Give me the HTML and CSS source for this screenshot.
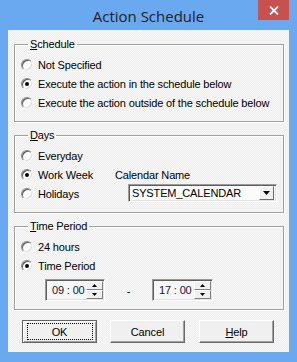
FILE: index.html
```html
<!DOCTYPE html>
<html>
<head>
  <meta charset="utf-8">
  <title>Action Schedule</title>
  <link rel="stylesheet" href="styles.css">
</head>
<body>
<div class="window">
  <div class="titlebar">
    <span class="title">Action Schedule</span>
    <span class="close">
      <svg width="10" height="9" viewBox="0 0 10 9"><path d="M1 0.5 L9 8.5 M9 0.5 L1 8.5" stroke="#fff" stroke-width="1.8"/></svg>
    </span>
  </div>
  <div class="client">
    <fieldset class="group group-schedule">
      <legend><u>S</u>chedule</legend>
      <div class="row"><span class="radio"></span>Not Specified</div>
      <div class="row"><span class="radio checked"></span>Execute the action in the schedule below</div>
      <div class="row"><span class="radio"></span>Execute the action outside of the schedule below</div>
    </fieldset>

    <fieldset class="group group-days">
      <legend><u>D</u>ays</legend>
      <div class="days-grid">
        <div class="row"><span class="radio"></span>Everyday</div>
        <div></div>
        <div class="row"><span class="radio checked"></span>Work Week</div>
        <div class="row">Calendar Name</div>
        <div class="row"><span class="radio"></span>Holidays</div>
        <div class="combo">
          <span class="combo-text">SYSTEM_CALENDAR</span>
          <span class="combo-btn">
            <svg width="7" height="4" viewBox="0 0 7 4"><path d="M0 0 H7 L3.5 4 Z" fill="#000"/></svg>
          </span>
        </div>
      </div>
    </fieldset>

    <fieldset class="group group-time">
      <legend><u>T</u>ime Period</legend>
      <div class="row"><span class="radio"></span>24 hours</div>
      <div class="row"><span class="radio checked"></span>Time Period</div>
      <div class="time-row">
        <div class="spin">
          <span class="spin-text">09 : 00</span>
          <span class="spin-btns">
            <span class="spin-btn"><svg width="5" height="3" viewBox="0 0 5 3"><path d="M0 3 H5 L2.5 0 Z" fill="#000"/></svg></span>
            <span class="spin-btn"><svg width="5" height="3" viewBox="0 0 5 3"><path d="M0 0 H5 L2.5 3 Z" fill="#000"/></svg></span>
          </span>
        </div>
        <span class="dash">-</span>
        <div class="spin">
          <span class="spin-text">17 : 00</span>
          <span class="spin-btns">
            <span class="spin-btn"><svg width="5" height="3" viewBox="0 0 5 3"><path d="M0 3 H5 L2.5 0 Z" fill="#000"/></svg></span>
            <span class="spin-btn"><svg width="5" height="3" viewBox="0 0 5 3"><path d="M0 0 H5 L2.5 3 Z" fill="#000"/></svg></span>
          </span>
        </div>
      </div>
    </fieldset>

    <div class="buttons">
      <div class="btn btn-default"><span class="focus">OK</span></div>
      <div class="btn">Cancel</div>
      <div class="btn"><span><u>H</u>elp</span></div>
    </div>
  </div>
</div>
</body>
</html>
```

FILE: styles.css
```css
body {
  margin: 0;
}

.window {
  width: 297px;
  height: 362px;
  background: #6aa8f0;
  font-family: "Liberation Sans", Arial, sans-serif;
  font-size: 11px;
  letter-spacing: -0.15px;
  color: #000;
}

.titlebar {
  position: relative;
  height: 30px;
  display: flex;
  align-items: center;
  justify-content: center;
}
.title {
  font-family: "Open Sans", "Noto Sans", sans-serif;
  font-size: 15px;
  letter-spacing: 0;
  color: #222;
  margin-top: 1px;
}
.close {
  position: absolute;
  right: 8px;
  top: 0;
  width: 31px;
  height: 20px;
  background: #c75050;
  display: flex;
  align-items: center;
  justify-content: center;
}

.client {
  margin: 0 8px;
  height: 322px;
  box-sizing: border-box;
  padding: 7px 5px 0 6px;
  background: repeating-conic-gradient(#efefef 0 25%, #f6f6f6 0 50%) 0 0 / 2px 2px;
}

.group {
  margin: 0 0 6px 0;
  padding: 4px 6px 0 6px;
  border: 1px solid #a0a0a0;
  box-shadow: inset 1px 1px 0 #fff, 1px 1px 0 #fff;
  box-sizing: border-box;
  min-width: 0;
}
.group legend {
  padding: 0 2px;
  margin-left: 7px;
  line-height: 14px;
}
.group-schedule { height: 85px; }
.group-days { height: 85px; }
.group-time { height: 91px; }

.row {
  display: flex;
  align-items: center;
  height: 19px;
  white-space: nowrap;
}

.radio {
  position: relative;
  width: 12px;
  height: 12px;
  box-sizing: border-box;
  border-radius: 50%;
  border: 1px solid;
  border-color: #8a8a8a #f4f4f4 #f4f4f4 #8a8a8a;
  box-shadow: inset 1px 1px 0 #5a5a5a, inset -1px -1px 0 #dcdcdc;
  background: #fff;
  margin-right: 5px;
  flex: none;
}
.radio.checked::after {
  content: '';
  position: absolute;
  left: 3px;
  top: 3px;
  width: 4px;
  height: 4px;
  border-radius: 50%;
  background: #000;
}

.days-grid {
  display: grid;
  grid-template-columns: 94px 1fr;
}

.combo {
  margin-left: 13px;
  width: 149px;
  height: 18px;
  box-sizing: border-box;
  border: 1px solid;
  border-color: #9a9a9a #fff #fff #9a9a9a;
  box-shadow: inset 1px 1px 0 #5e5e5e, inset -1px -1px 0 #e3e3e3;
  background: #fbfbfb;
  display: flex;
  align-items: center;
  padding: 0 2px 0 3px;
}
.combo-text {
  flex: 1;
}
.combo-btn {
  width: 15px;
  height: 14px;
  box-sizing: border-box;
  background: #f0f0f0;
  border: 1px solid;
  border-color: #fff #696969 #696969 #fff;
  display: flex;
  align-items: center;
  justify-content: center;
}

.time-row {
  display: flex;
  align-items: center;
  margin-top: 4px;
  padding-left: 24px;
}
.spin {
  width: 60px;
  height: 22px;
  box-sizing: border-box;
  border: 1px solid;
  border-color: #9a9a9a #fff #fff #9a9a9a;
  box-shadow: inset 1px 1px 0 #5e5e5e, inset -1px -1px 0 #e3e3e3;
  background: #f7f7f7;
  display: flex;
  align-items: center;
  padding: 2px 1px 2px 6px;
}
.spin + .dash + .spin {
  width: 61px;
}
.spin-text {
  flex: 1;
  color: #141438;
}
.spin-btns {
  display: flex;
  flex-direction: column;
  width: 17px;
  height: 18px;
}
.spin-btn {
  flex: 1;
  box-sizing: border-box;
  background: #f0f0f0;
  border: 1px solid;
  border-color: #fff #808080 #808080 #fff;
  display: flex;
  align-items: center;
  justify-content: center;
}
.dash {
  width: 47px;
  text-align: center;
  margin-top: 2px;
}

.buttons {
  display: flex;
  gap: 13px;
  margin-top: 10px;
  padding-left: 8px;
}
.btn {
  width: 75px;
  height: 23px;
  box-sizing: border-box;
  background: #f0f0f0;
  border: 1px solid;
  border-color: #fff #696969 #696969 #fff;
  box-shadow: inset -1px -1px 0 #a0a0a0;
  display: flex;
  align-items: center;
  justify-content: center;
}
.btn + .btn + .btn {
  margin-left: 1px;
}
.btn-default {
  border: 1px solid #646464;
  box-shadow: inset 1px 1px 0 #fff, inset -1px -1px 0 #a0a0a0;
}
.focus {
  width: 66px;
  height: 17px;
  box-sizing: border-box;
  border: 1px dotted #000;
  display: flex;
  align-items: center;
  justify-content: center;
}
```
